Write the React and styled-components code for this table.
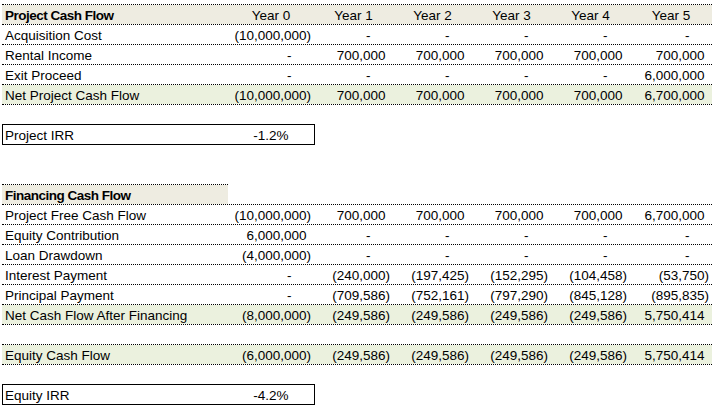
import React from 'react'
import styled, { createGlobalStyle } from 'styled-components'

const GlobalStyle = createGlobalStyle`
  body {
    margin: 0;
    background: #fff;
  }
`

// column widths of the sheet: label, Year 0 .. Year 5
const COLS = '226px 86px 79px 79px 79px 79px 82px'

const tones = {
  head: '#eeece1',
  total: '#ebf1de',
}

const years = ['Year 0', 'Year 1', 'Year 2', 'Year 3', 'Year 4', 'Year 5']

const projectRows = [
  { label: 'Acquisition Cost', values: [-10000000, 0, 0, 0, 0, 0] },
  { label: 'Rental Income', values: [0, 700000, 700000, 700000, 700000, 700000] },
  { label: 'Exit Proceed', values: [0, 0, 0, 0, 0, 6000000] },
  { label: 'Net Project Cash Flow', values: [-10000000, 700000, 700000, 700000, 700000, 6700000], tone: 'total' },
]

const financingRows = [
  { label: 'Project Free Cash Flow', values: [-10000000, 700000, 700000, 700000, 700000, 6700000] },
  { label: 'Equity Contribution', values: [6000000, 0, 0, 0, 0, 0] },
  { label: 'Loan Drawdown', values: [-4000000, 0, 0, 0, 0, 0] },
  { label: 'Interest Payment', values: [0, -240000, -197425, -152295, -104458, -53750] },
  { label: 'Principal Payment', values: [0, -709586, -752161, -797290, -845128, -895835] },
  { label: 'Net Cash Flow After Financing', values: [-8000000, -249586, -249586, -249586, -249586, 5750414], tone: 'total' },
]

const equityRow = { label: 'Equity Cash Flow', values: [-6000000, -249586, -249586, -249586, -249586, 5750414], tone: 'total' }

const fmt = (n) => n.toLocaleString('en-US')

const Num = ({ v }) => {
  if (v === 0) return <NumCell>-<Ghost>00)</Ghost></NumCell>
  if (v < 0) return <NumCell>({fmt(-v)})</NumCell>
  return <NumCell>{fmt(v)}<Ghost>)</Ghost></NumCell>
}

const DataRow = ({ row, top }) => (
  <Row $tone={row.tone} $top={top}>
    <Label>{row.label}</Label>
    {row.values.map((v, i) => <Num key={i} v={v} />)}
  </Row>
)

const App = () => {
  return (
    <Sheet>
      <GlobalStyle />

      <section>
        <Row $tone="head" $top>
          <Label $bold>Project Cash Flow</Label>
          {years.map((y) => <YearCell key={y}>{y}</YearCell>)}
        </Row>
        {projectRows.map((r) => <DataRow key={r.label} row={r} />)}
      </section>

      <IrrBox $gap={19}>
        <IrrLabel>Project IRR</IrrLabel>
        <IrrValue>-1.2%</IrrValue>
      </IrrBox>

      <Block $gap={39}>
        <Row $top>
          <Label $bold $lined $tone="head">Financing Cash Flow</Label>
        </Row>
        {financingRows.map((r) => <DataRow key={r.label} row={r} />)}
      </Block>

      <Block $gap={19}>
        <DataRow row={equityRow} top />
      </Block>

      <IrrBox $gap={19}>
        <IrrLabel>Equity IRR</IrrLabel>
        <IrrValue>-4.2%</IrrValue>
      </IrrBox>
    </Sheet>
  )
}

//STYLED COMPONENTS
const Sheet = styled.div`
  padding: 4px 0 0 2px;
  width: 710px;
  font-family: "Liberation Sans", Arial, sans-serif;
  font-size: 13.5px;
  color: #000;
`

const Block = styled.section`
  margin-top: ${(p) => p.$gap || 0}px;
`

const Row = styled.div`
  display: grid;
  grid-template-columns: ${COLS};
  grid-template-rows: 100%;
  box-sizing: border-box;
  height: ${(p) => (p.$top ? 21 : 20)}px;
  line-height: 19px;
  border-top: ${(p) => (p.$top && p.$tone ? '1px dotted #000' : 'none')};
  border-bottom: 1px dotted #000;
  background: ${(p) => tones[p.$tone] || 'transparent'};
  background-clip: padding-box;
`

const Label = styled.div`
  padding: 1px 0 0 3px;
  white-space: nowrap;
  font-weight: ${(p) => (p.$bold ? 700 : 400)};
  letter-spacing: ${(p) => (p.$bold ? '-0.5px' : 'normal')};
  background: ${(p) => tones[p.$tone] || 'transparent'};
  background-clip: padding-box;
  border-top: ${(p) => (p.$lined ? '1px dotted #000' : 'none')};
`

const YearCell = styled.div`
  padding-top: 1px;
  text-align: center;
  white-space: nowrap;
`

const NumCell = styled.div`
  padding: 1px 3px 0 0;
  text-align: right;
  white-space: nowrap;
`

const Ghost = styled.span`
  visibility: hidden;
`

const IrrBox = styled.div`
  display: grid;
  grid-template-columns: 225px 86px;
  box-sizing: border-box;
  width: 313px;
  height: 21px;
  line-height: 19px;
  margin-top: ${(p) => p.$gap}px;
  border: 1px solid #000;
`

const IrrLabel = styled.div`
  padding: 1px 0 0 2px;
  white-space: nowrap;
`

const IrrValue = styled.div`
  padding-top: 1px;
  text-align: center;
`

export default App
